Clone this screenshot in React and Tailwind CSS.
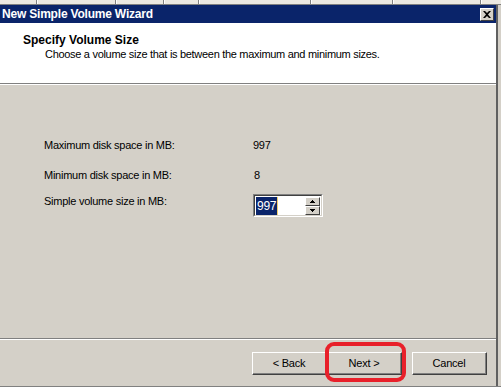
import React from "react";

const font = { fontFamily: '"Liberation Sans", Arial, sans-serif' };

function Btn({ children }) {
  return (
    <div className="w-[75px] h-[23px] border border-t-white border-l-white border-r-[#404040] border-b-[#404040] bg-[#d4d0c8]">
      <div className="w-full h-full border-r border-b border-[#808080] flex items-center justify-center text-[11px] tracking-[-0.2px] text-black leading-none">
        {children}
      </div>
    </div>
  );
}

function SpinArrow({ up }) {
  return (
    <div className="h-[9px] w-[15px] border border-t-white border-l-white border-r-[#404040] border-b-[#404040] bg-[#d4d0c8] flex items-center justify-center">
      <svg width="5" height="3" viewBox="0 0 5 3">
        {up ? <path d="M2 0h1v1h1v1h1v1H0V2h1V1h1z" fill="#000" /> : <path d="M0 0h5v1H4v1H3v1H2V2H1V1H0z" fill="#000" />}
      </svg>
    </div>
  );
}

export default function App() {
  const dividers = [36, 115, 163, 198, 310, 392, 480];
  return (
    <div className="w-[501px] h-[387px] bg-[#d4d0c8] overflow-hidden flex flex-col" style={font}>
      {/* strip of the window behind */}
      <div className="h-[5px] relative bg-[#ece9e2] border-b border-[#808080]">
        {dividers.map((x) => (
          <span key={x} className="absolute top-0 h-[4px] w-[2px] border-l border-[#808080] bg-white" style={{ left: x }} />
        ))}
      </div>

      <div className="flex flex-1">
        <div className="w-[496px] flex flex-col">
          {/* title bar */}
          <div className="h-[18px] bg-[#0a246a] flex items-center justify-between pl-[2px] pr-[2px]">
            <span className="text-white font-bold text-[12px] tracking-[-0.2px] leading-none">New Simple Volume Wizard</span>
            <div className="w-[14px] h-[13px] border border-t-white border-l-white border-r-[#404040] border-b-[#404040] bg-[#d4d0c8] flex items-center justify-center">
              <svg width="8" height="7" viewBox="0 0 8 7">
                <path d="M0 0h2l2 2 2-2h2L5 3.5 8 7H6L4 5 2 7H0l3-3.5z" fill="#000" />
              </svg>
            </div>
          </div>

          {/* header */}
          <div className="h-[60px] bg-white pl-[23px] pt-[11px]">
            <div className="font-bold text-[12px] leading-[13px] text-black">Specify Volume Size</div>
            <div className="pl-[22px] mt-[1px] text-[11px] tracking-[-0.3px] leading-[13px] text-black">
              Choose a volume size that is between the maximum and minimum sizes.
            </div>
          </div>
          <div className="h-px bg-[#808080]" />
          <div className="h-px bg-white" />

          {/* body */}
          <div className="h-[253px] pl-[44px] pt-[54px] text-[11px] tracking-[-0.25px] leading-[13px] text-black">
            <div className="flex">
              <span className="w-[209px]">Maximum disk space in MB:</span>
              <span>997</span>
            </div>
            <div className="flex mt-[17px]">
              <span className="w-[209px]">Minimum disk space in MB:</span>
              <span className="pl-px">8</span>
            </div>
            <div className="flex mt-[12px] items-start">
              <span className="w-[209px] mt-[1px]">Simple volume size in MB:</span>
              <div className="w-[70px] h-[23px] border border-t-[#808080] border-l-[#808080] border-r-white border-b-white">
                <div className="w-full h-full border border-t-[#404040] border-l-[#404040] border-r-[#d4d0c8] border-b-[#d4d0c8] bg-white flex items-center pl-px pr-px">
                  <span className="bg-[#0a246a] text-white text-[12px] leading-[18px] px-px">997</span>
                  <span className="w-px h-[18px] bg-[#f0d070]" />
                  <div className="ml-auto flex flex-col">
                    <SpinArrow up />
                    <SpinArrow />
                  </div>
                </div>
              </div>
            </div>
          </div>

          <div className="h-px bg-[#808080]" />
          <div className="h-px bg-white" />

          {/* footer */}
          <div className="h-[46px] relative flex items-start pt-[12px] pl-[252px]">
            <Btn>&lt; Back</Btn>
            <Btn>Next &gt;</Btn>
            <div className="ml-[10px]">
              <Btn>Cancel</Btn>
            </div>
            <div className="absolute left-[325px] top-[2px] w-[81px] h-[40px] rounded-[9px] border-[4px] border-[#e8202a]" />
          </div>
        </div>
        <div className="w-[2px] bg-[#606060]" />
        <div className="flex-1 bg-[#d4d0c8]" />
      </div>
      <div className="h-px bg-[#808080]" />
    </div>
  );
}
